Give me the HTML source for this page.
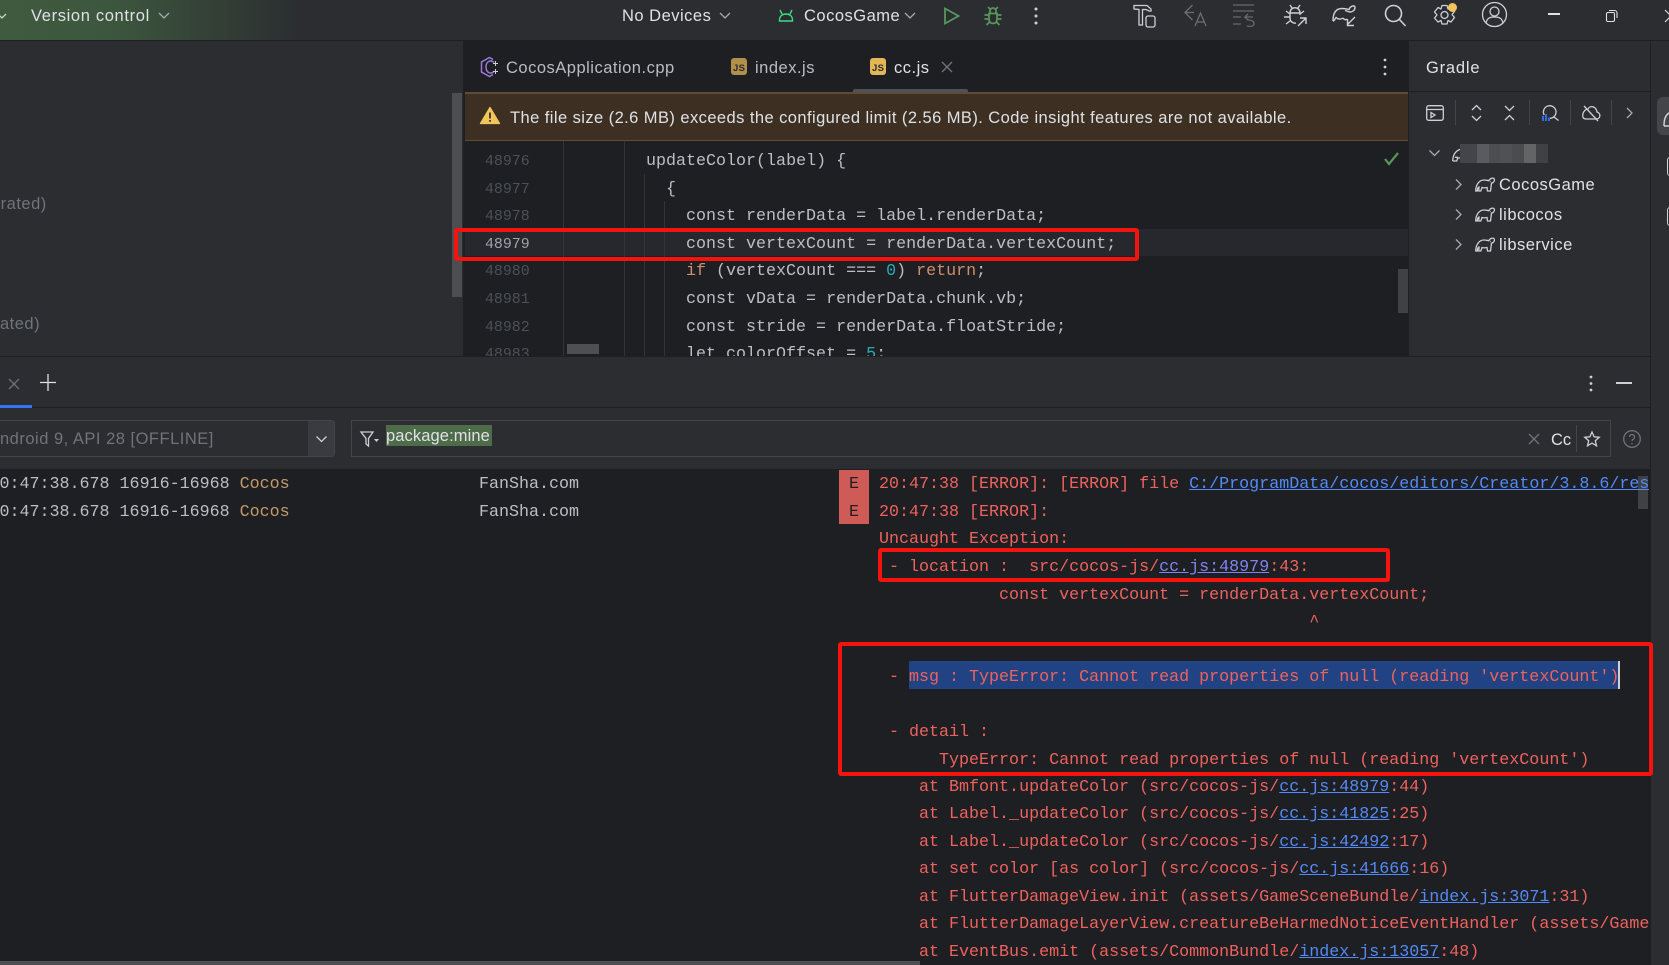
<!DOCTYPE html>
<html><head><meta charset="utf-8"><style>
html,body{margin:0;padding:0;width:1669px;height:965px;overflow:hidden;background:#2b2d30}
body{position:relative;font-family:"Liberation Sans",sans-serif}
.a{position:absolute}
.t{position:absolute;white-space:pre;font-family:"Liberation Sans",sans-serif;font-size:16.5px;letter-spacing:.5px;line-height:26px;color:#dfe1e5;margin-top:1px}
.m{position:absolute;white-space:pre;font-family:"Liberation Mono",monospace;font-size:16.68px;line-height:26px;color:#bcbec4;margin-top:2px}
.n{color:#4b5059;left:485px;font-size:14.9px}
.e{color:#ee625e;left:879px}
.e a{color:#548af7;text-decoration:underline}
.k{color:#cf8e6d}.d{color:#2aacb8}
.r{position:absolute;border:4px solid #f5130d;border-radius:3px;box-sizing:border-box}
svg{position:absolute;overflow:visible;fill:none;stroke:#ced0d6;stroke-width:1.3}
</style></head><body>

<!-- top bar -->
<div class="a" style="left:0;top:0;width:1669px;height:40px;background:linear-gradient(90deg,#3e5a3f 0,#3d573e 110px,#2b2d30 300px)"></div>
<div class="a" style="left:300px;top:0;width:1369px;height:40px;background:#2b2d30"></div>
<div class="a" style="left:0;top:40px;width:1669px;height:1px;background:#1e1f22"></div>
<svg style="left:0;top:12px" width="8" height="8"><path d="M-2 2l4 4 4-4"/></svg>
<div class="t" style="left:31px;top:2px;letter-spacing:.65px">Version control</div>
<svg style="left:158px;top:12px" width="12" height="8"><path d="M1 1l5 5 5-5" stroke="#a8aab0"/></svg>
<div class="t" style="left:622px;top:2px">No Devices</div>
<svg style="left:719px;top:12px" width="12" height="8"><path d="M1 1l5 5 5-5" stroke="#a8aab0"/></svg>
<svg style="left:778px;top:9px" width="16" height="14"><path d="M4 5L2 1M12 5l2-4M1.500 12v-1C1.500 7 4.500 5 8 5s6.500 2 6.500 6v1Z" stroke="#3ddc84" stroke-width="1.400"/></svg>
<div class="t" style="left:804px;top:2px">CocosGame</div>
<svg style="left:904px;top:12px" width="12" height="8"><path d="M1 1l5 5 5-5" stroke="#a8aab0"/></svg>
<svg style="left:943px;top:6px" width="18" height="20"><path d="M2 2.500V17.500L15.500 10Z" stroke="#57965c" stroke-width="1.800"/></svg>
<svg style="left:983px;top:6px" width="20" height="20"><path d="M6 7.500h8v6a4 4 0 0 1-8 0ZM7 7V5a3 3 0 0 1 6 0v2M6 9H1.500M14 9h4.500M6 13H1.500M14 13h4.500M6.500 16l-3 3M13.500 16l3 3M7 3L5 1M13 3l2-2" stroke="#57965c" stroke-width="1.800"/></svg>
<svg style="left:1034px;top:7px" width="4" height="18"><circle cx="2" cy="2" r="1.500" fill="#ced0d6" stroke="none"/><circle cx="2" cy="9" r="1.500" fill="#ced0d6" stroke="none"/><circle cx="2" cy="16" r="1.500" fill="#ced0d6" stroke="none"/></svg>
<!-- hammer -->
<svg style="left:1133px;top:3px" width="24" height="24"><path d="M1 2.500H14l4 3.500v2l-2 0-3-1.500H9.500V22H6V6.500L1 6Z"/><rect x="13" y="13" width="9" height="11" rx="2"/></svg>
<svg style="left:1184px;top:3px" width="24" height="24" opacity=".4"><path d="M8.500 2L1 9.500 8.500 17M1 9.500h9"/><path d="M11 23l5.500-13L22 23M12.500 19h8"/></svg>
<svg style="left:1232px;top:3px" width="24" height="24" opacity=".38"><path d="M1 2h21M1 8h21M1 14h8M1 21h8M21 14h-8l3-3M13 14l3 3c3 0 6 1 6 3.500S19 24 15 23"/></svg>
<svg style="left:1283px;top:4px" width="24" height="23"><path d="M7 9c0-7 10-7 10 0v2M7 9v5a5 5 0 0 0 6 5M7 9h10M3 7l4 3M21 7l-4 3M1 13h6M3 20l4-3M9 4L7 1M15 4l2-3M15 22l8-8M17 14h6v6" stroke-width="1.400"/></svg>
<svg style="left:1332px;top:4px" width="24" height="24"><path d="M1 17C1 9 4 4.500 10 4.500c3 0 5 .5 7 1C18 2 23 .5 23 3.500c0 3-3 4.500-5 4.500-1.500 0-3-1-5-1.500M1 17c2 0 2-3 3-3.500 2 2 5 2 7 .5M11 14c1 2 3 2 4 1M23 13l-8 8M15.500 15v6.500h6.500" stroke-width="1.400"/></svg>
<svg style="left:1384px;top:4px" width="22" height="22"><circle cx="9.500" cy="9.500" r="8" stroke-width="1.600"/><path d="M15.500 15.500l6 6.500" stroke-width="1.600"/></svg>
<svg style="left:1433px;top:4px" width="24" height="24"><path d="M9 1.500h5l1 3.500 3-1.500 3.500 4-2.500 3 2.500 3-3.500 4.500-3-1.500-1 3.500H9l-1-3.500-3 1.500L1.500 14l2.500-3-2.500-3L5 3.500l3 1.500Z" stroke-linejoin="round"/><circle cx="11.500" cy="11" r="3.500"/></svg>
<div class="a" style="left:1448px;top:3px;width:9px;height:9px;border-radius:50%;background:#f2c55c"></div>
<svg style="left:1482px;top:2px" width="25" height="25"><circle cx="12.500" cy="12.500" r="12"/><circle cx="12.500" cy="9.500" r="4.500"/><path d="M4 21c1-5 4-6 8.500-6s7.500 1 8.500 6"/></svg>
<div class="a" style="left:1548px;top:13px;width:12px;height:1.500px;background:#dfe1e5"></div>
<svg style="left:1606px;top:10px" width="12" height="12"><rect x=".5" y="2.500" width="8" height="9" rx="1.500" stroke="#dfe1e5" stroke-width="1.100"/><path d="M3 .5h5.500a2.500 2.500 0 0 1 2.500 2.500V8" stroke="#dfe1e5" stroke-width="1.100"/></svg>
<svg style="left:1664px;top:9px" width="14" height="14"><path d="M1 1l12 12M13 1L1 13" stroke="#dfe1e5" stroke-width="1.100"/></svg>

<!-- left panel -->
<div class="a" style="left:0;top:41px;width:463px;height:315px;background:#2b2d30;overflow:hidden">
<div class="t" style="left:-9px;top:149px;color:#6f737a">erated)</div>
<div class="t" style="left:0;top:269px;color:#6f737a">ated)</div>
<div class="a" style="left:452px;top:52px;width:10px;height:204px;background:#4d4e51"></div>
</div>
<div class="a" style="left:463px;top:41px;width:2px;height:315px;background:#1e1f22"></div>

<!-- editor -->
<div class="a" style="left:465px;top:41px;width:943px;height:315px;background:#1e1f22"></div>
<svg style="left:480px;top:56px" width="20" height="22"><path d="M13 3.500L9.500 1.500 1.500 6v10l8 4.500 3.500-2M14 6.500c-3-3-8-1.500-8 4.500s5 7.500 8 4.500" stroke="#9a78d8" stroke-width="1.500"/><path d="M15.500 5v5M13 7.500h5M15.500 13v5M13 15.500h5" stroke="#ced0d6" stroke-width="1"/></svg>
<div class="t" style="left:506px;top:54px;color:#b9bcc3">CocosApplication.cpp</div>
<div class="a" style="left:731px;top:58px;width:16px;height:17px;background:#b38f4c;border-radius:3px"></div>
<div class="a" style="left:733px;top:64px;font:bold 9.500px/10px 'Liberation Sans',sans-serif;color:#2b2d30;letter-spacing:.3px">JS</div>
<div class="t" style="left:755px;top:54px;color:#b9bcc3">index.js</div>
<div class="a" style="left:870px;top:58px;width:16px;height:17px;background:#e3b756;border-radius:3px"></div>
<div class="a" style="left:872px;top:64px;font:bold 9.500px/10px 'Liberation Sans',sans-serif;color:#2b2d30;letter-spacing:.3px">JS</div>
<div class="t" style="left:894px;top:54px">cc.js</div>
<svg style="left:942px;top:62px" width="10" height="10"><path d="M0 0l10 10M10 0L0 10" stroke="#6f737a"/></svg>
<div class="a" style="left:853px;top:89px;width:115px;height:3px;background:#4e5157;border-radius:2px 2px 0 0"></div>
<svg style="left:1383px;top:58px" width="4" height="18"><circle cx="2" cy="2" r="1.400" fill="#ced0d6" stroke="none"/><circle cx="2" cy="9" r="1.400" fill="#ced0d6" stroke="none"/><circle cx="2" cy="16" r="1.400" fill="#ced0d6" stroke="none"/></svg>

<div class="a" style="left:465px;top:92px;width:943px;height:49px;background:#3d3023;border-top:2px solid #5e4d33;border-bottom:1px solid #5e4d33;box-sizing:border-box"></div>
<svg style="left:480px;top:107px" width="20" height="17"><path d="M10 .5L19.500 16.500H.5Z" fill="#f2c55c" stroke="#f2c55c" stroke-linejoin="round"/><path d="M10 5.500v6M10 13v1.800" stroke="#3d3023" stroke-width="1.800"/></svg>
<div class="t" style="left:510px;top:104px;letter-spacing:.43px">The file size (2.6 MB) exceeds the configured limit (2.56 MB). Code insight features are not available.</div>

<div class="a" style="left:465px;top:141px;width:943px;height:215px;overflow:hidden">
  <div class="a" style="left:0;top:88px;width:943px;height:27px;background:#26282e"></div>
  <div class="a" style="left:98px;top:0;width:1px;height:215px;background:#313438"></div>
  <div class="a" style="left:159px;top:0;width:1px;height:215px;background:#313438"></div>
  <div class="a" style="left:179px;top:33px;width:1px;height:182px;background:#313438"></div>
  <div class="a" style="left:199px;top:60px;width:1px;height:155px;background:#313438"></div>
  <div class="a" style="left:102px;top:203px;width:32px;height:10px;background:#4e4f51"></div>
  <div class="a" style="left:933px;top:128px;width:10px;height:44px;background:#404144"></div>
</div>
<div class="a" style="left:465px;top:141px;width:943px;height:215px;overflow:hidden">
  <div style="position:absolute;left:-465px;top:-141px;width:1669px;height:965px">
  <div class="m n" style="top:147px">48976</div><div class="m" style="left:646px;top:147px">updateColor(label) {</div>
  <div class="m n" style="top:175px">48977</div><div class="m" style="left:666px;top:175px">{</div>
  <div class="m n" style="top:202px">48978</div><div class="m" style="left:686px;top:202px">const renderData = label.renderData;</div>
  <div class="m n" style="top:230px;color:#a1a3ab">48979</div><div class="m" style="left:686px;top:230px">const vertexCount = renderData.vertexCount;</div>
  <div class="m n" style="top:257px">48980</div><div class="m" style="left:686px;top:257px"><span class="k">if</span> (vertexCount === <span class="d">0</span>) <span class="k">return</span>;</div>
  <div class="m n" style="top:285px">48981</div><div class="m" style="left:686px;top:285px">const vData = renderData.chunk.vb;</div>
  <div class="m n" style="top:313px">48982</div><div class="m" style="left:686px;top:313px">const stride = renderData.floatStride;</div>
  <div class="m n" style="top:340px">48983</div><div class="m" style="left:686px;top:340px">let colorOffset = <span class="d">5</span>;</div>
  </div>
</div>
<svg style="left:1384px;top:152px" width="15" height="13"><path d="M1 7l4 5 9-11" stroke="#57965c" stroke-width="2.200"/></svg>
<div class="r" style="left:454px;top:228px;width:685px;height:33px"></div>

<!-- gradle panel -->
<div class="a" style="left:1408px;top:41px;width:1px;height:315px;background:#1e1f22"></div>
<div class="t" style="left:1426px;top:54px;letter-spacing:.8px">Gradle</div>
<div class="a" style="left:1409px;top:91px;width:241px;height:1px;background:#1e1f22"></div>
<svg style="left:1426px;top:105px" width="18" height="16"><rect x=".7" y=".7" width="16.600" height="14.600" rx="2"/><path d="M1 4.500h16M5 7.500v5l4-2.500Z"/></svg>
<div class="a" style="left:1455px;top:100px;width:1px;height:25px;background:#43454a"></div>
<svg style="left:1471px;top:105px" width="11" height="16"><path d="M1 5l4.500-4.500L10 5M1 11l4.500 4.500L10 11"/></svg>
<svg style="left:1504px;top:105px" width="11" height="16"><path d="M1 1l4.500 4.500L10 1M1 15l4.500-4.500L10 15"/></svg>
<div class="a" style="left:1529px;top:100px;width:1px;height:25px;background:#43454a"></div>
<svg style="left:1541px;top:105px" width="18" height="17"><path d="M3.200 10A6.300 6.300 0 1 1 9 13.300"/><path d="M13 12l4.500 3.500"/><path d="M2 11v5M5 9v7M8 12.500V16" stroke="#3574f0" stroke-width="1.800"/></svg>
<div class="a" style="left:1570px;top:100px;width:1px;height:25px;background:#43454a"></div>
<svg style="left:1581px;top:104px" width="20" height="18"><path d="M5 15h10c5 0 5-6 1-7C15 2 9 1 7 5 2 5-1 15 5 15ZM3 2l14 15"/></svg>
<div class="a" style="left:1611px;top:100px;width:1px;height:25px;background:#43454a"></div>
<svg style="left:1626px;top:108px" width="7" height="10"><path d="M1 0l5 5-5 5" stroke="#a8aab0"/></svg>
<svg style="left:1429px;top:150px" width="11" height="7"><path d="M.5 .5L5.500 5.500 10.500 .5" stroke="#a8aab0"/></svg>
<svg style="left:1452px;top:147px" width="10" height="15"><path d="M.7 14C1 8 3 4 9 2M.7 14h4l1-3h5M3 10c1 .5 2 .5 3 0"/></svg>
<div class="a" style="left:1460px;top:144px;width:88px;height:19px;background:linear-gradient(90deg,#43454a 0 17px,#5a5b5e 17px 29px,#4c4e51 29px 40px,#505154 40px 52px,#4a4c4f 52px 64px,#636466 64px 76px,#3f4144 76px 88px)"></div>
<svg style="left:1455px;top:179px" width="7" height="11"><path d="M1 .5L6 5.500 1 10.500" stroke="#a8aab0"/></svg>
<svg style="left:1455px;top:209px" width="7" height="11"><path d="M1 .5L6 5.500 1 10.500" stroke="#a8aab0"/></svg>
<svg style="left:1455px;top:239px" width="7" height="11"><path d="M1 .5L6 5.500 1 10.500" stroke="#a8aab0"/></svg>
<svg style="left:1475px;top:177px" width="20" height="15"><path d="M.7 14C.7 8 4 3 9 3c2 0 3.500.5 5 .7 1-2.700 4.500-3.200 5.300-1.700 .7 2-1 4-2.800 4.200L15.500 14h-3l-.5-3.500c-2 .5-3.500.5-5 0L5.800 14H3.800l.2-4C2.500 10.500 2.300 12.500 2.300 14Z"/><circle cx="15.500" cy="4.800" r=".5" fill="#ced0d6" stroke="none"/></svg>
<svg style="left:1475px;top:207px" width="20" height="15"><path d="M.7 14C.7 8 4 3 9 3c2 0 3.500.5 5 .7 1-2.700 4.500-3.200 5.300-1.700 .7 2-1 4-2.800 4.200L15.500 14h-3l-.5-3.500c-2 .5-3.500.5-5 0L5.800 14H3.800l.2-4C2.500 10.500 2.300 12.500 2.300 14Z"/><circle cx="15.500" cy="4.800" r=".5" fill="#ced0d6" stroke="none"/></svg>
<svg style="left:1475px;top:237px" width="20" height="15"><path d="M.7 14C.7 8 4 3 9 3c2 0 3.500.5 5 .7 1-2.700 4.500-3.200 5.300-1.700 .7 2-1 4-2.800 4.200L15.500 14h-3l-.5-3.500c-2 .5-3.500.5-5 0L5.800 14H3.800l.2-4C2.500 10.500 2.300 12.500 2.300 14Z"/><circle cx="15.500" cy="4.800" r=".5" fill="#ced0d6" stroke="none"/></svg>
<div class="t" style="left:1499px;top:171px">CocosGame</div>
<div class="t" style="left:1499px;top:201px">libcocos</div>
<div class="t" style="left:1499px;top:231px">libservice</div>

<!-- right strip -->
<div class="a" style="left:1650px;top:41px;width:1px;height:924px;background:#1e1f22"></div>
<div class="a" style="left:1657px;top:97px;width:30px;height:38px;border-radius:6px;background:#43454a"></div>
<svg style="left:1663px;top:108px" width="10" height="20"><path d="M1 18C1 10 3 6 8 4M1 18h5" stroke-width="1.500"/></svg>
<div class="a" style="left:1667px;top:157px;width:20px;height:19px;border:1.500px solid #ced0d6;border-radius:3px;box-sizing:border-box"></div>
<div class="a" style="left:1667px;top:207px;width:20px;height:19px;border:1.500px solid #ced0d6;border-radius:3px;box-sizing:border-box"></div>

<!-- bottom panel -->
<div class="a" style="left:0;top:356px;width:1650px;height:1px;background:#1e1f22"></div>
<svg style="left:9px;top:379px" width="10" height="10"><path d="M0 0l10 10M10 0L0 10" stroke="#6f737a"/></svg>
<svg style="left:40px;top:374px" width="16" height="17"><path d="M0 8.500h16M8 0v17" stroke="#dfe1e5"/></svg>
<div class="a" style="left:0;top:407px;width:1650px;height:1px;background:#1e1f22"></div>
<div class="a" style="left:0;top:405px;width:32px;height:3px;background:#3574f0"></div>
<svg style="left:1589px;top:375px" width="4" height="17"><circle cx="2" cy="2" r="1.400" fill="#ced0d6" stroke="none"/><circle cx="2" cy="8.500" r="1.400" fill="#ced0d6" stroke="none"/><circle cx="2" cy="15" r="1.400" fill="#ced0d6" stroke="none"/></svg>
<div class="a" style="left:1616px;top:382px;width:16px;height:1.500px;background:#ced0d6"></div>

<div class="a" style="left:-4px;top:420px;width:339px;height:37px;border:1px solid #43454a;border-radius:4px;box-sizing:border-box;background:#2b2d30"></div>
<div class="a" style="left:308px;top:421px;width:26px;height:35px;background:#393b40;border-radius:0 3px 3px 0"></div>
<div class="t" style="left:0;top:425px;color:#6f737a">ndroid 9, API 28 [OFFLINE]</div>
<svg style="left:316px;top:436px" width="11" height="7"><path d="M.5 .5L5.500 5.500 10.500 .5" stroke="#ced0d6"/></svg>
<div class="a" style="left:351px;top:420px;width:1260px;height:37px;border:1px solid #43454a;box-sizing:border-box;background:#2b2d30"></div>
<svg style="left:360px;top:431px" width="19" height="16"><path d="M1 1h12L8.500 7.500V15L6 13V7.500Z"/><path d="M14 8h5l-2.500 3Z" fill="#ced0d6" stroke="none"/></svg>
<div class="a" style="left:386px;top:425px;width:106px;height:21px;background:#4e6b4a"></div>
<div class="t" style="left:386px;top:422px;letter-spacing:.1px">package:mine</div>
<svg style="left:1529px;top:434px" width="10" height="10"><path d="M0 0l10 10M10 0L0 10" stroke="#6f737a"/></svg>
<div class="t" style="left:1551px;top:426px;letter-spacing:0">Cc</div>
<div class="a" style="left:1576px;top:425px;width:1px;height:27px;background:#43454a"></div>
<svg style="left:1584px;top:431px" width="16" height="16"><path d="M8 1l2.100 4.800 5.100.5-3.900 3.400 1.200 5.100L8 12.100 3.500 14.800l1.200-5.100L.8 6.300l5.100-.5Z"/></svg>
<svg style="left:1623px;top:430px" width="18" height="18"><circle cx="9" cy="9" r="8.300" stroke="#6f737a"/><path d="M6.500 7a2.500 2.500 0 1 1 3.500 2.300c-.8.400-1 .9-1 1.700M9 13v1.300" stroke="#6f737a"/></svg>

<!-- log area -->
<div class="a" style="left:0;top:469px;width:1650px;height:496px;background:#1e1f22"></div>
<div class="m" style="left:-.5px;top:470px">0:47:38.678 16916-16968 <span style="color:#c29a6b">Cocos</span></div>
<div class="m" style="left:479px;top:470px">FanSha.com</div>
<div class="m" style="left:-.5px;top:498px">0:47:38.678 16916-16968 <span style="color:#c29a6b">Cocos</span></div>
<div class="m" style="left:479px;top:498px">FanSha.com</div>
<div class="a" style="left:839px;top:470px;width:30px;height:54px;background:#cf5b56"></div>
<div class="m" style="left:849px;top:470px;color:#1e1f22">E</div>
<div class="m" style="left:849px;top:498px;color:#1e1f22">E</div>

<div class="a" style="left:909px;top:661px;width:710px;height:28px;background:#214283"></div>
<div class="a" style="left:1618px;top:661px;width:2px;height:28px;background:#ced0d6"></div>
<div class="a" style="left:1638px;top:476px;width:10px;height:33px;background:#404144"></div>

<div class="a" style="left:0;top:469px;width:1649px;height:496px;overflow:hidden">
<div style="position:absolute;left:0;top:-469px;width:1669px;height:965px">
<div class="m e" style="top:470px">20:47:38 [ERROR]: [ERROR] file <a>C:/ProgramData/cocos/editors/Creator/3.8.6/res</a></div>
<div class="m e" style="top:498px">20:47:38 [ERROR]:</div>
<div class="m e" style="top:525px">Uncaught Exception:</div>
<div class="m e" style="top:553px"> - location :  src/cocos-js/<a style="color:#7f84f5">cc.js:48979</a>:43:</div>
<div class="m e" style="top:581px">            const vertexCount = renderData.vertexCount;</div>
<div class="m e" style="top:608px">                                           ^</div>
<div class="m e" style="top:663px"> - msg : TypeError: Cannot read properties of null (reading 'vertexCount')</div>
<div class="m e" style="top:718px"> - detail :</div>
<div class="m e" style="top:746px">      TypeError: Cannot read properties of null (reading 'vertexCount')</div>
<div class="m e" style="top:773px">    at Bmfont.updateColor (src/cocos-js/<a>cc.js:48979</a>:44)</div>
<div class="m e" style="top:800px">    at Label._updateColor (src/cocos-js/<a>cc.js:41825</a>:25)</div>
<div class="m e" style="top:828px">    at Label._updateColor (src/cocos-js/<a>cc.js:42492</a>:17)</div>
<div class="m e" style="top:855px">    at set color [as color] (src/cocos-js/<a>cc.js:41666</a>:16)</div>
<div class="m e" style="top:883px">    at FlutterDamageView.init (assets/GameSceneBundle/<a>index.js:3071</a>:31)</div>
<div class="m e" style="top:910px">    at FlutterDamageLayerView.creatureBeHarmedNoticeEventHandler (assets/Game</div>
<div class="m e" style="top:938px">    at EventBus.emit (assets/CommonBundle/<a>index.js:13057</a>:48)</div>
</div></div>
<div class="a" style="left:0;top:961px;width:920px;height:4px;background:#4d4e51"></div>

<div class="r" style="left:878px;top:548px;width:512px;height:34px"></div>
<div class="r" style="left:838px;top:642px;width:815px;height:134px"></div>
</body></html>
